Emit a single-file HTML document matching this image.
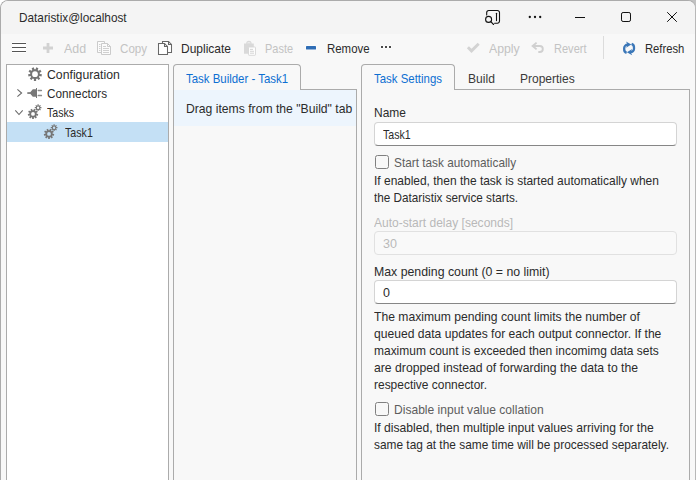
<!DOCTYPE html>
<html lang="en">
<head>
<meta charset="utf-8">
<title>Dataristix@localhost</title>
<style>
html,body{margin:0;padding:0;}
body{width:696px;height:480px;overflow:hidden;background:#ffffff;position:relative;
 font-family:"Liberation Sans",sans-serif;font-size:12px;}
#win{position:absolute;left:0;top:0;width:694px;height:500px;border:1px solid #ababab;border-right-color:#b8b8b8;
 border-radius:8px 8px 0 0;background:#f8f8f8;overflow:hidden;}
#title{position:absolute;left:0;top:0;width:694px;height:33px;background:#f4f4f4;}
.t{position:absolute;white-space:nowrap;line-height:16px;font-size:12.6px;transform-origin:0 0;}
.abs{position:absolute;}
#tree{position:absolute;left:6px;top:64px;width:161px;height:440px;border:1px solid #ababab;background:#fff;}
#sel{position:absolute;left:7px;top:122px;width:161px;height:20px;background:#c4e0f5;}
.tab{position:absolute;top:64px;height:26px;border:1px solid #ababab;border-bottom:none;border-radius:4px 4px 0 0;background:#f8f8f8;box-sizing:border-box;}
.pane{position:absolute;top:89px;height:440px;border:1px solid #ababab;background:#f8f8f8;box-sizing:border-box;}
#band{position:absolute;left:174px;top:90px;width:182px;height:35.6px;background:#edf5fd;}
.inp{position:absolute;left:374px;width:303px;height:24px;box-sizing:border-box;border:1px solid #d4d4d4;border-bottom-color:#868686;border-radius:4px;background:#fff;}
.inp.dis{border-color:#e1e1e1;background:#f9f9f9;}
.cb{position:absolute;left:375px;width:14px;height:14px;box-sizing:border-box;border:1px solid #808080;border-radius:2.5px;background:#f8f8f8;}
svg{position:absolute;overflow:visible;}
</style>
</head>
<body>
<div style="position:absolute;right:0;top:0;width:8px;height:8px;background:#c2c2c2"></div>
<div id="win">
<div id="title"></div>
</div>

<!-- panels -->
<div id="tree"></div>
<div id="sel"></div>

<div class="pane" style="left:173px;width:184px;"></div>
<div class="tab" style="left:173px;width:128px;"></div>
<div id="band"></div>

<div class="pane" style="left:361px;width:329px;"></div>
<div class="tab" style="left:361px;width:94px;"></div>

<!-- form controls -->
<div class="inp" style="top:122px;"></div>
<div class="cb" style="top:155px;"></div>
<div class="inp dis" style="top:231px;"></div>
<div class="inp" style="top:280px;"></div>
<div class="cb" style="top:402px;"></div>

<svg width="696" height="480" viewBox="0 0 696 480" style="left:0;top:0;pointer-events:none">
<g fill="none" stroke="#111" stroke-width="1.1" stroke-linecap="round">
<path d="M486.7 15 V12.6 a2.1 2.1 0 0 1 2.1 -2.1 H497.4 a2.1 2.1 0 0 1 2.1 2.1 V21.1 a2.1 2.1 0 0 1 -2.1 2.1 H494.6"/>
<circle cx="488.6" cy="19.4" r="3"/>
<path d="M490.8 21.6 L493.6 24.5"/>
<path d="M496.5 13.2 V20.6"/>
</g>
<g fill="#111"><circle cx="529.8" cy="17" r="1.15"/><circle cx="535" cy="17" r="1.15"/><circle cx="540.2" cy="17" r="1.15"/></g>
<rect x="575" y="17" width="10" height="1" fill="#111"/>
<rect x="621.5" y="12.5" width="9" height="9" rx="1.6" fill="none" stroke="#111" stroke-width="1"/>
<path d="M667.2 12.2 L676.8 21.8 M676.8 12.2 L667.2 21.8" stroke="#111" stroke-width="1" fill="none"/>
<rect x="12" y="42" width="14" height="11" fill="#ffffff"/>
<g fill="#555"><rect x="12" y="43" width="14" height="1"/><rect x="12" y="47" width="14" height="1"/><rect x="12" y="51" width="14" height="1"/></g>
<path d="M46.6 43 h2.8 v3.6 h3.6 v2.8 h-3.6 v3.6 h-2.8 v-3.6 h-3.6 v-2.8 h3.6 z" fill="#d2d2d2"/>
<g fill="#fbfbfb" stroke="#cbcbcb" stroke-width="1">
<path d="M97.5 41.5 h7 v11 h-7 z"/>
<path d="M101.5 43.5 h6 l3 3 v8 h-9 z"/>
<path d="M107.5 43.5 v3 h3" fill="none"/>
<path d="M103 46.5 h3 M103 48.5 h6 M103 50.5 h6 M103 52.5 h6 M99 44.5 h1.5 M99 46.5 h1.5 M99 48.5 h1.5 M99 50.5 h1.5" fill="none" stroke-width="0.9"/>
</g>
<g fill="#ffffff" stroke="#686868" stroke-width="1.05">
<path d="M162.5 41.5 h6 l3 3 v8 h-9 z"/>
<path d="M168.5 41.5 v3 h3" fill="none"/>
<path d="M158.5 43.5 h6 l3 3 v8 h-9 z"/>
<path d="M164.5 43.5 v3 h3" fill="none"/>
</g>
<path d="M244 43.5 h2.2 a2.7 2.7 0 0 1 5.4 0 h2.2 v10.2 h-9.8 z" fill="#d9d9d9"/>
<path d="M247 43.3 a2 1.6 0 0 1 3.8 0 z" fill="#f3f3f3"/>
<rect x="248.5" y="47" width="7" height="8.3" rx="0.6" fill="#fdfdfd" stroke="#d6d6d6" stroke-width="0.9"/>
<path d="M250 49.4 h3 M250 51.3 h4 M250 53.2 h4" stroke="#d0d0d0" stroke-width="0.9" fill="none"/>
<rect x="305.5" y="45.5" width="11" height="4.6" rx="1" fill="#ffffff"/>
<rect x="306" y="46" width="10" height="3.6" rx="0.6" fill="#2f6db5"/>
<g fill="#fff"><rect x="380.5" y="45.5" width="3" height="3"/><rect x="384.5" y="45.5" width="3" height="3"/><rect x="388.5" y="45.5" width="3" height="3"/></g>
<g fill="#4a4a4a"><rect x="381" y="46" width="2" height="2"/><rect x="385" y="46" width="2" height="2"/><rect x="389" y="46" width="2" height="2"/></g>
<path d="M467.9 47.3 L471.5 50.9 L478.7 43.8" fill="none" stroke="#d3d3d3" stroke-width="2.9"/>
<path d="M536.6 42.6 L532.6 46 L536.6 49.4 M532.8 46 H539.8 a3 3 0 0 1 3 3 a3 3 0 0 1 -3 3 H538.3" fill="none" stroke="#d0d0d0" stroke-width="1.9"/>
<rect x="603" y="36" width="1" height="23" fill="#dcdcdc"/>
<g fill="none" stroke="#3b77b8" stroke-width="2.3">
<path d="M628.4 44.7 H627.6 A3.4 3.4 0 0 0 624.2 48.1 V49.2 A3.7 3.7 0 0 0 626.6 52.9"/>
<path d="M629.8 52.1 H630.6 A3.4 3.4 0 0 0 634 48.7 V47.6 A3.7 3.7 0 0 0 631.6 43.9"/>
</g>
<path d="M626 41.5 L631.3 44.6 L626 47.8 L627.5 44.6 Z" fill="#3b77b8"/>
<path d="M632.2 49 L626.9 52.2 L632.2 55.3 L630.7 52.2 Z" fill="#3b77b8"/>
<path d="M36.12 78.92 L36.11 80.96 L33.89 80.96 L33.88 78.92 L32.79 78.52 L31.47 80.08 L29.77 78.65 L31.08 77.09 L30.50 76.08 L28.49 76.42 L28.10 74.24 L30.11 73.88 L30.31 72.73 L28.55 71.70 L29.66 69.79 L31.43 70.80 L32.32 70.05 L31.63 68.13 L33.71 67.37 L34.42 69.28 L35.58 69.28 L36.29 67.37 L38.37 68.13 L37.68 70.05 L38.57 70.80 L40.34 69.79 L41.45 71.70 L39.69 72.73 L39.89 73.88 L41.90 74.24 L41.51 76.42 L39.50 76.08 L38.92 77.09 L40.23 78.65 L38.53 80.08 L37.21 78.52 Z M32.10 74.15 a2.90 2.90 0 1 0 5.80 0 a2.90 2.90 0 1 0 -5.80 0 Z" fill="#757575" fill-rule="evenodd"/>
<path d="M17.4 89.4 L21.6 93 L17.4 96.6" fill="none" stroke="#6a6a6a" stroke-width="1.1"/>
<g fill="#787878">
<rect x="27.3" y="92.2" width="3.2" height="1.7"/>
<path d="M29.6 93 L32.8 89.3 H36 V88.1 H37 V97.9 H36 V96.7 H32.8 Z"/>
</g>
<g fill="#8a8a8a">
<rect x="37.6" y="89.7" width="4.5" height="1.5" rx="0.6"/>
<rect x="37.6" y="94.8" width="4.5" height="1.5" rx="0.6"/>
</g>
<path d="M15.3 110.4 L19 114.5 L22.7 110.4" fill="none" stroke="#6a6a6a" stroke-width="1.1"/>
<path d="M33.87 117.50 L33.86 119.03 L32.14 119.03 L32.13 117.50 L31.35 117.21 L30.36 118.38 L29.04 117.28 L30.02 116.10 L29.61 115.38 L28.10 115.64 L27.80 113.94 L29.31 113.67 L29.45 112.86 L28.13 112.08 L28.99 110.59 L30.32 111.35 L30.95 110.82 L30.44 109.38 L32.05 108.79 L32.59 110.22 L33.41 110.22 L33.95 108.79 L35.56 109.38 L35.05 110.82 L35.68 111.35 L37.01 110.59 L37.87 112.08 L36.55 112.86 L36.69 113.67 L38.20 113.94 L37.90 115.64 L36.39 115.38 L35.98 116.10 L36.96 117.28 L35.64 118.38 L34.65 117.21 Z M31.10 113.90 a1.90 1.90 0 1 0 3.80 0 a1.90 1.90 0 1 0 -3.80 0 Z" fill="#767676" fill-rule="evenodd"/><path d="M37.51 105.48 L37.49 104.36 L38.71 104.36 L38.69 105.48 L39.26 105.71 L40.03 104.90 L40.90 105.77 L40.09 106.54 L40.32 107.11 L41.44 107.09 L41.44 108.31 L40.32 108.29 L40.09 108.86 L40.90 109.63 L40.03 110.50 L39.26 109.69 L38.69 109.92 L38.71 111.04 L37.49 111.04 L37.51 109.92 L36.94 109.69 L36.17 110.50 L35.30 109.63 L36.11 108.86 L35.88 108.29 L34.76 108.31 L34.76 107.09 L35.88 107.11 L36.11 106.54 L35.30 105.77 L36.17 104.90 L36.94 105.71 Z M36.90 107.70 a1.20 1.20 0 1 0 2.40 0 a1.20 1.20 0 1 0 -2.40 0 Z" fill="#767676" fill-rule="evenodd"/>
<path d="M49.87 137.50 L49.86 139.03 L48.14 139.03 L48.13 137.50 L47.35 137.21 L46.36 138.38 L45.04 137.28 L46.02 136.10 L45.61 135.38 L44.10 135.64 L43.80 133.94 L45.31 133.67 L45.45 132.86 L44.13 132.08 L44.99 130.59 L46.32 131.35 L46.95 130.82 L46.44 129.38 L48.05 128.79 L48.59 130.22 L49.41 130.22 L49.95 128.79 L51.56 129.38 L51.05 130.82 L51.68 131.35 L53.01 130.59 L53.87 132.08 L52.55 132.86 L52.69 133.67 L54.20 133.94 L53.90 135.64 L52.39 135.38 L51.98 136.10 L52.96 137.28 L51.64 138.38 L50.65 137.21 Z M47.10 133.90 a1.90 1.90 0 1 0 3.80 0 a1.90 1.90 0 1 0 -3.80 0 Z" fill="#767676" fill-rule="evenodd"/><path d="M53.51 125.48 L53.49 124.36 L54.71 124.36 L54.69 125.48 L55.26 125.71 L56.03 124.90 L56.90 125.77 L56.09 126.54 L56.32 127.11 L57.44 127.09 L57.44 128.31 L56.32 128.29 L56.09 128.86 L56.90 129.63 L56.03 130.50 L55.26 129.69 L54.69 129.92 L54.71 131.04 L53.49 131.04 L53.51 129.92 L52.94 129.69 L52.17 130.50 L51.30 129.63 L52.11 128.86 L51.88 128.29 L50.76 128.31 L50.76 127.09 L51.88 127.11 L52.11 126.54 L51.30 125.77 L52.17 124.90 L52.94 125.71 Z M52.90 127.70 a1.20 1.20 0 1 0 2.40 0 a1.20 1.20 0 1 0 -2.40 0 Z" fill="#767676" fill-rule="evenodd"/>
</svg>

<header class="titlebar">
<span class="t" style="left:19.00px;top:10.00px;color:#2b2b2b;transform:scaleX(0.9363)">Dataristix@localhost</span>
</header>
<div class="toolbar" role="toolbar">
<span class="t" style="left:64.00px;top:41.00px;color:#c3c3c3;transform:scaleX(0.9854)">Add</span>
<span class="t" style="left:120.00px;top:41.00px;color:#c3c3c3;transform:scaleX(0.9210)">Copy</span>
<span class="t" style="left:181.00px;top:41.00px;color:#2b2b2b;transform:scaleX(0.9524)">Duplicate</span>
<span class="t" style="left:265.00px;top:41.00px;color:#c3c3c3;transform:scaleX(0.8702)">Paste</span>
<span class="t" style="left:327.00px;top:41.00px;color:#2b2b2b;transform:scaleX(0.9074)">Remove</span>
<span class="t" style="left:489.00px;top:41.00px;color:#c3c3c3;transform:scaleX(0.9756)">Apply</span>
<span class="t" style="left:554.00px;top:41.00px;color:#c3c3c3;transform:scaleX(0.8767)">Revert</span>
<span class="t" style="left:645.00px;top:41.00px;color:#2b2b2b;transform:scaleX(0.8922)">Refresh</span>
</div>
<div class="treeview" role="tree">
<span class="t" style="left:47.00px;top:67.00px;color:#2b2b2b;transform:scaleX(0.9727)">Configuration</span>
<span class="t" style="left:47.00px;top:86.00px;color:#2b2b2b;transform:scaleX(0.9337)">Connectors</span>
<span class="t" style="left:47.00px;top:105.00px;color:#2b2b2b;transform:scaleX(0.8412)">Tasks</span>
<span class="t" style="left:65.00px;top:125.00px;color:#2b2b2b;transform:scaleX(0.8449)">Task1</span>
</div>
<section class="task-builder">
<span class="t" style="left:186.00px;top:71.00px;color:#0d6fd2;transform:scaleX(0.9080)">Task Builder - Task1</span>
<span class="t" style="left:186.00px;top:101.00px;color:#2b2b2b;transform:scaleX(0.9663)">Drag items from the &quot;Build&quot; tab</span>
</section>
<div class="tabs" role="tablist">
<span class="t" style="left:374.00px;top:71.00px;color:#0d6fd2;transform:scaleX(0.9074)">Task Settings</span>
<span class="t" style="left:468.00px;top:71.00px;color:#3a3a3a;transform:scaleX(0.9609)">Build</span>
<span class="t" style="left:520.00px;top:71.00px;color:#3a3a3a;transform:scaleX(0.9533)">Properties</span>
</div>
<section class="task-settings" role="tabpanel">
<span class="t" style="left:374.00px;top:105.00px;color:#2b2b2b;transform:scaleX(0.9500)">Name</span>
<span class="t" style="left:383.00px;top:127.00px;color:#2b2b2b;transform:scaleX(0.8420)">Task1</span>
<span class="t" style="left:394.00px;top:155.00px;color:#5d5d5d;transform:scaleX(0.9379)">Start task automatically</span>
<span class="t" style="left:374.00px;top:173.00px;color:#2b2b2b;transform:scaleX(0.9510)">If enabled, then the task is started automatically when</span>
<span class="t" style="left:374.00px;top:190.00px;color:#2b2b2b;transform:scaleX(0.9312)">the Dataristix service starts.</span>
<span class="t" style="left:374.00px;top:215.00px;color:#b9b9b9;transform:scaleX(0.9550)">Auto-start delay [seconds]</span>
<span class="t" style="left:383.00px;top:236.00px;color:#b9b9b9;transform:scaleX(0.9967)">30</span>
<span class="t" style="left:374.00px;top:264.00px;color:#2b2b2b;transform:scaleX(0.9774)">Max pending count (0 = no limit)</span>
<span class="t" style="left:383.00px;top:285.00px;color:#2b2b2b;transform:scaleX(0.9892)">0</span>
<span class="t" style="left:374.00px;top:309.00px;color:#2b2b2b;transform:scaleX(0.9643)">The maximum pending count limits the number of</span>
<span class="t" style="left:374.00px;top:326.00px;color:#2b2b2b;transform:scaleX(0.9611)">queued data updates for each output connector. If the</span>
<span class="t" style="left:374.00px;top:343.00px;color:#2b2b2b;transform:scaleX(0.9503)">maximum count is exceeded then incomimg data sets</span>
<span class="t" style="left:374.00px;top:360.00px;color:#2b2b2b;transform:scaleX(0.9697)">are dropped instead of forwarding the data to the</span>
<span class="t" style="left:374.00px;top:377.00px;color:#2b2b2b;transform:scaleX(0.9494)">respective connector.</span>
<span class="t" style="left:394.00px;top:402.00px;color:#5d5d5d;transform:scaleX(0.9583)">Disable input value collation</span>
<span class="t" style="left:374.00px;top:420.00px;color:#2b2b2b;transform:scaleX(0.9627)">If disabled, then multiple input values arriving for the</span>
<span class="t" style="left:374.00px;top:437.00px;color:#2b2b2b;transform:scaleX(0.9433)">same tag at the same time will be processed separately.</span>
</section>
</body>
</html>
